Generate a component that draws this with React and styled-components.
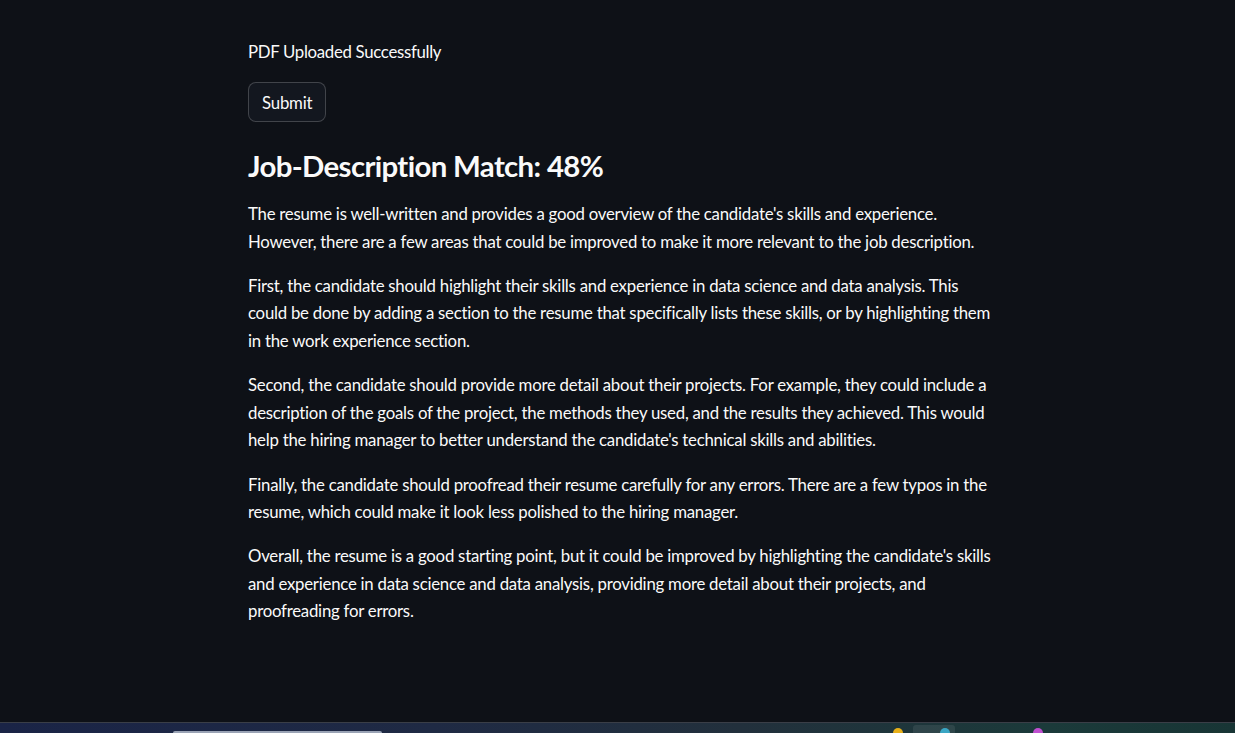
import React from 'react';
import styled, { createGlobalStyle } from 'styled-components';

const GlobalStyle = createGlobalStyle`
    html, body {
        margin: 0;
        padding: 0;
        background: #0e1117;
    }
    body {
        font-family: Lato, "Open Sans", sans-serif;
        color: #fafafa;
    }
`

const Page = styled.div`
    display: flex;
    flex-direction: column;
    height: 733px;
    overflow: hidden;
    background: #0e1117;
`

const Main = styled.main`
    flex: 1;
    display: flex;
    justify-content: center;
    padding-left: 7px;
`

const Block = styled.div`
    width: 746px;
    padding-top: 38px;
    display: flex;
    flex-direction: column;
    align-items: flex-start;
    gap: 17px;
`

const Note = styled.p`
    margin: 0;
    font-size: 16.8px;
    line-height: 27.3px;
    letter-spacing: -0.3px;
`

const Button = styled.button`
    height: 40px;
    padding: 0 13px;
    border-radius: 8px;
    border: 1px solid rgba(250, 250, 250, 0.2);
    background: #13171f;
    color: #fafafa;
    font-family: inherit;
    font-size: 16.8px;
    letter-spacing: -0.2px;
    cursor: pointer;
`

const Heading = styled.h3`
    margin: 0;
    padding-top: 9px;
    font-size: 29.4px;
    font-weight: 700;
    line-height: 35px;
    letter-spacing: -0.65px;
`

const Body = styled.div`
    display: flex;
    flex-direction: column;
    gap: 17.3px;
`

const Para = styled.p`
    margin: 0;
    font-size: 16.8px;
    line-height: 27.3px;
    letter-spacing: -0.24px;
`

const Taskbar = styled.div`
    height: 10px;
    position: relative;
    border-top: 1px solid #3a3e47;
    background: linear-gradient(90deg, #1a2446 0%, #1f2a44 35%, #22303c 60%, #1b3a3a 85%, #183535 100%);
`

const TaskPill = styled.div`
    position: absolute;
    left: 173px;
    bottom: 0;
    width: 209px;
    height: 2px;
    border-radius: 2px 2px 0 0;
    background: #9aa3b5;
`

const TaskIcon = styled.div`
    position: absolute;
    left: ${p => p.x}px;
    bottom: -5px;
    width: 10px;
    height: 10px;
    border-radius: 50%;
    background: ${p => p.color};
`

const TaskSlot = styled.div`
    position: absolute;
    left: 913px;
    bottom: 0;
    width: 42px;
    height: 8px;
    border-radius: 3px 3px 0 0;
    background: rgba(255, 255, 255, 0.08);
`

const paragraphs = [
    "The resume is well-written and provides a good overview of the candidate's skills and experience. However, there are a few areas that could be improved to make it more relevant to the job description.",
    "First, the candidate should highlight their skills and experience in data science and data analysis. This could be done by adding a section to the resume that specifically lists these skills, or by highlighting them in the work experience section.",
    "Second, the candidate should provide more detail about their projects. For example, they could include a description of the goals of the project, the methods they used, and the results they achieved. This would help the hiring manager to better understand the candidate's technical skills and abilities.",
    "Finally, the candidate should proofread their resume carefully for any errors. There are a few typos in the resume, which could make it look less polished to the hiring manager.",
    "Overall, the resume is a good starting point, but it could be improved by highlighting the candidate's skills and experience in data science and data analysis, providing more detail about their projects, and proofreading for errors.",
]

const App = () => {
    return (
        <Page>
            <GlobalStyle />
            <Main>
                <Block>
                    <Note>PDF Uploaded Successfully</Note>
                    <Button>Submit</Button>
                    <Heading>Job-Description Match: 48%</Heading>
                    <Body>
                        {paragraphs.map((text, i) => (
                            <Para key={i}>{text}</Para>
                        ))}
                    </Body>
                </Block>
            </Main>
            <Taskbar>
                <TaskPill />
                <TaskIcon x={893} color="#e8b019" />
                <TaskSlot />
                <TaskIcon x={940} color="#3aa6c4" />
                <TaskIcon x={1033} color="#c04fd0" />
            </Taskbar>
        </Page>
    );
}

export default App;
